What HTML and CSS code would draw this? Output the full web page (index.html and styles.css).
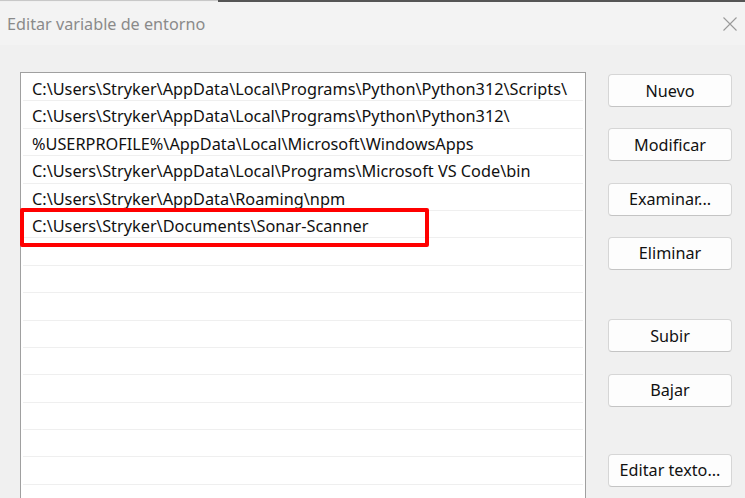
FILE: index.html
```html
<!DOCTYPE html>
<html lang="es">
<head>
<meta charset="utf-8">
<title>Editar variable de entorno</title>
<link rel="stylesheet" href="styles.css">
</head>
<body>
<div class="window">
  <div class="topstrip"><span class="seg-light"></span><span class="seg-dark"></span></div>
  <header class="titlebar">
    <span class="title">Editar variable de entorno</span>
    <svg class="close" width="14" height="14" viewBox="0 0 14 14" aria-hidden="true">
      <path d="M0.5 0.5 L13.5 13.5 M13.5 0.5 L0.5 13.5" stroke="#9a9a9a" stroke-width="1.1" fill="none"/>
    </svg>
  </header>
  <main class="content">
    <div class="listbox">
      <ul class="rows">
        <li class="row">C:\Users\Stryker\AppData\Local\Programs\Python\Python312\Scripts\</li>
        <li class="row">C:\Users\Stryker\AppData\Local\Programs\Python\Python312\</li>
        <li class="row">%USERPROFILE%\AppData\Local\Microsoft\WindowsApps</li>
        <li class="row">C:\Users\Stryker\AppData\Local\Programs\Microsoft VS Code\bin</li>
        <li class="row">C:\Users\Stryker\AppData\Roaming\npm</li>
        <li class="row">C:\Users\Stryker\Documents\Sonar-Scanner</li>
        <li class="row"></li>
        <li class="row"></li>
        <li class="row"></li>
        <li class="row"></li>
        <li class="row"></li>
        <li class="row"></li>
        <li class="row"></li>
        <li class="row"></li>
        <li class="row"></li>
        <li class="row"></li>
        <li class="row"></li>
      </ul>
      <div class="highlight"></div>
    </div>
    <div class="buttons">
      <button class="btn">Nuevo</button>
      <button class="btn">Modificar</button>
      <button class="btn">Examinar...</button>
      <button class="btn">Eliminar</button>
      <button class="btn btn-sep">Subir</button>
      <button class="btn">Bajar</button>
      <button class="btn btn-sep2">Editar texto...</button>
    </div>
  </main>
</div>
</body>
</html>
```
FILE: styles.css
```css
html, body {
  margin: 0;
  padding: 0;
  height: 100%;
  overflow: hidden;
}
body {
  background: #f0f0f0;
  font-family: "Noto Sans", "Open Sans", "Liberation Sans", sans-serif;
  color: #111;
}
.window {
  width: 745px;
  height: 498px;
  overflow: hidden;
}
.topstrip {
  display: flex;
  height: 2px;
}
.seg-light {
  width: 218px;
  background: #c8c8c8;
  height: 1px;
}
.seg-dark {
  flex: 1;
  background: #555;
}
.titlebar {
  height: 43px;
  background: #f3f3f3;
  display: flex;
  align-items: center;
  justify-content: space-between;
  padding: 0 8px 0 7px;
}
.title {
  font-size: 16.2px;
  color: #8a8a8a;
}
.close {
  display: block;
}
.content {
  display: flex;
  align-items: flex-start;
  padding: 27px 0 0 20px;
}
.listbox {
  position: relative;
  width: 564px;
  height: 500px;
  border: 1px solid #a0a0a0;
  background: #fff;
  flex: none;
}
.rows {
  list-style: none;
  margin: 0;
  padding: 1px 0 0;
}
.row {
  margin: 0 2px;
  height: 26.4px;
  border-bottom: 1px solid #efefef;
  padding-left: 9px;
  font-size: 16.3px;
  line-height: 30px;
  white-space: nowrap;
  overflow: hidden;
  color: #111;
}
.highlight {
  position: absolute;
  left: -1px;
  top: 135px;
  width: 401px;
  height: 31px;
  border: 4px solid #ff0000;
  border-radius: 2px;
}
.buttons {
  display: flex;
  flex-direction: column;
  gap: 21.33px;
  margin: 2px 0 0 22px;
  width: 124px;
}
.btn {
  height: 33px;
  width: 124px;
  background: #fdfdfd;
  border: 1px solid #d6d6d6;
  border-bottom-color: #c4c4c4;
  border-radius: 4px;
  font-family: inherit;
  font-size: 16.2px;
  color: #111;
  padding: 0;
}
.btn-sep {
  margin-top: 28px;
}
.btn-sep2 {
  margin-top: 26px;
}
```
